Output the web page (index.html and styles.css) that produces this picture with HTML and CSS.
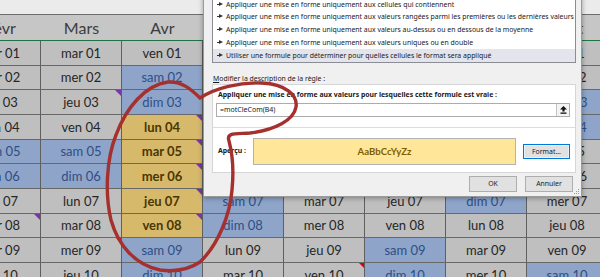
FILE: index.html
```html
<!DOCTYPE html>
<html lang="fr">
<head>
  <meta charset="UTF-8">
  <title>Mise en forme conditionnelle</title>
  <link rel="stylesheet" href="styles.css">
</head>
<body>
  <div class="topbar"></div>
  <div class="grid">
    <div class="head">Févr</div><div class="head">Mars</div><div class="head">Avr</div><div class="head">Mai</div><div class="head">Juin</div><div class="head">Juil</div><div class="head">Août</div><div class="head">Sept</div>

    <!-- Mai..Août rows 01-06 sit under the dialog -->
    <div class="c">mar 01</div><div class="c">mar 01</div><div class="c">ven 01</div><div class="c we"></div><div class="c"></div><div class="c"></div><div class="c"></div><div class="c">jeu 01</div>
    <div class="c">mer 02</div><div class="c">mer 02</div><div class="c we">sam 02</div><div class="c"></div><div class="c"></div><div class="c we"></div><div class="c"></div><div class="c">ven 02</div>
    <div class="c">jeu 03</div><div class="c n">jeu 03</div><div class="c we">dim 03</div><div class="c"></div><div class="c"></div><div class="c we"></div><div class="c"></div><div class="c we">sam 03</div>
    <div class="c">ven 04</div><div class="c">ven 04</div><div class="c hl n">lun 04</div><div class="c"></div><div class="c we"></div><div class="c"></div><div class="c"></div><div class="c we">dim 04</div>
    <div class="c we">sam 05</div><div class="c we">sam 05</div><div class="c hl n">mar 05</div><div class="c"></div><div class="c we"></div><div class="c"></div><div class="c"></div><div class="c">lun 05</div>
    <div class="c we">dim 06</div><div class="c we">dim 06</div><div class="c hl n">mer 06</div><div class="c"></div><div class="c"></div><div class="c"></div><div class="c we"></div><div class="c">mar 06</div>
    <div class="c">lun 07</div><div class="c">lun 07</div><div class="c hl n">jeu 07</div><div class="c we">sam 07</div><div class="c">mar 07</div><div class="c">jeu 07</div><div class="c we">dim 07</div><div class="c">mer 07</div>
    <div class="c n">mar 08</div><div class="c">mar 08</div><div class="c hl n">ven 08</div><div class="c we">dim 08</div><div class="c">mer 08</div><div class="c">ven 08</div><div class="c">lun 08</div><div class="c">jeu 08</div>
    <div class="c">mer 09</div><div class="c r">mer 09</div><div class="c we">sam 09</div><div class="c">lun 09</div><div class="c">jeu 09</div><div class="c we">sam 09</div><div class="c">mar 09</div><div class="c">ven 09</div>
    <div class="c">jeu 10</div><div class="c">jeu 10</div><div class="c we">dim 10</div><div class="c">mar 10</div><div class="c r">ven 10</div><div class="c we">dim 10</div><div class="c">mer 10</div><div class="c we">sam 10</div>
  </div>

  <div class="dialog">
    <div class="rules">
      <div class="rule"><span class="arrow"></span>Mettre en forme toutes les cellules d'après leur valeur</div>
      <div class="rule"><span class="arrow"></span>Appliquer une mise en forme uniquement aux cellules qui contiennent</div>
      <div class="rule"><span class="arrow"></span>Appliquer une mise en forme uniquement aux valeurs rangées parmi les premières ou les dernières valeurs</div>
      <div class="rule"><span class="arrow"></span>Appliquer une mise en forme uniquement aux valeurs au-dessus ou en dessous de la moyenne</div>
      <div class="rule"><span class="arrow"></span>Appliquer une mise en forme uniquement aux valeurs uniques ou en double</div>
      <div class="rule selected"><span class="arrow"></span>Utiliser une formule pour déterminer pour quelles cellules le format sera appliqué</div>
    </div>

    <div class="desc-label"><u>M</u>odifier la description de la règle :</div>

    <div class="group">
      <div class="formula-part">
        <div class="bold-label">Appliquer une mise en forme aux valeurs pour lesquelles cette formule est vraie :</div>
        <div class="formula">
          <span class="formula-text">=motCleCom(B4)</span>
          <span class="ref-btn">
            <svg width="7" height="8" viewBox="0 0 7 8"><path d="M3.5 0 L7 3.5 L4.6 3.5 L4.6 5.5 L2.4 5.5 L2.4 3.5 L0 3.5 Z" fill="#111"/><rect x="0.5" y="6.5" width="6" height="1.3" fill="#111"/></svg>
          </span>
        </div>
      </div>
      <div class="preview-part">
        <div class="bold-label preview-label">Aperçu :</div>
        <div class="preview">AaBbCcYyZz</div>
        <div class="btn focus">Format...</div>
      </div>
    </div>

    <div class="actions">
      <div class="btn">OK</div>
      <div class="btn">Annuler</div>
    </div>

    <svg class="grip" width="8" height="8" viewBox="0 0 8 8">
      <rect x="6" y="2" width="1" height="1" fill="#999"/>
      <rect x="4" y="4" width="1" height="1" fill="#999"/>
      <rect x="6" y="4" width="1" height="1" fill="#999"/>
      <rect x="2" y="6" width="1" height="1" fill="#999"/>
      <rect x="4" y="6" width="1" height="1" fill="#999"/>
      <rect x="6" y="6" width="1" height="1" fill="#999"/>
    </svg>
  </div>

  <svg class="annot" width="600" height="277" viewBox="0 0 600 277">
    <path d="M200 98 C215 88, 240 82, 262 83 C285 84, 298 95, 296 107 C294 120, 275 130, 250 133 C236 134, 226 132, 229 141 C233 156, 234 170, 232 190 C230 215, 218 245, 200 262 C188 270, 175 272, 160 270 C135 265, 118 245, 111 220 C105 195, 106 160, 116 135 C126 108, 145 85, 168 82 C182 81, 192 90, 200 98" fill="none" stroke="#a5302d" stroke-width="3.4" stroke-linecap="round" stroke-linejoin="round"/>
  </svg>
</body>
</html>
```

FILE: styles.css
```css
body {
  margin: 0;
  width: 600px;
  height: 277px;
  overflow: hidden;
  position: relative;
  background: #c0c0c0;
  font-family: Lato, "Noto Sans", sans-serif;
}

.topbar {
  height: 14px;
  background: #ebebeb;
  border-bottom: 1px solid #6d6d6d;
}

.grid {
  display: grid;
  grid-template-columns: repeat(8, 81px);
  grid-template-rows: 26px;
  grid-auto-rows: 24.67px;
  margin-left: -40px;
}

.head {
  box-sizing: border-box;
  display: flex;
  align-items: center;
  justify-content: center;
  background: #c6c6c6;
  border-bottom: 1px solid #217346;
  font-size: 16px;
  color: #3c3c3c;
}

.c {
  box-sizing: border-box;
  position: relative;
  display: flex;
  align-items: center;
  justify-content: center;
  background: #bfbfbf;
  border-right: 1px solid #5f5f5f;
  border-bottom: 1px solid #686868;
  font-size: 13px;
  color: #262626;
}

.c.we {
  background: #8ea4c8;
  color: #2f4f86;
}

.c.hl {
  background: #d7b96c;
  color: #4a3700;
  font-weight: 700;
}

.c.n::after,
.c.r::after {
  content: "";
  position: absolute;
  top: 0;
  right: 0;
  border-top: 6px solid #7a35a8;
  border-left: 6px solid transparent;
}

.c.r::after {
  border-top: 5px solid #e00000;
  border-left: 5px solid transparent;
}

/* dialog */
.dialog {
  position: absolute;
  left: 203px;
  top: -20px;
  width: 379px;
  height: 217px;
  box-sizing: border-box;
  padding: 0 5px 0 8px;
  background: #f0f0f0;
  border-left: 1px solid #9a9a9a;
  border-right: 1px solid #9a9a9a;
  border-bottom: 1px solid #9a9a9a;
  box-shadow: 0 1px 5px rgba(0, 0, 0, 0.35);
  font-family: "Noto Sans", "Liberation Sans", sans-serif;
  font-size: 6.9px;
  color: #1a1a1a;
}

.rules {
  margin-top: 1px;
  padding-top: 3px;
  background: #fff;
  border: 1px solid #8a8d93;
}

.rule {
  height: 12.75px;
  display: flex;
  align-items: center;
  gap: 3px;
  padding-left: 4px;
  white-space: nowrap;
  overflow: hidden;
}

.rule.selected {
  background: #e4e4ec;
}

.arrow {
  width: 6px;
  height: 5px;
  flex: none;
  background:
    linear-gradient(#333, #333) 0 2px / 2px 1px no-repeat;
  position: relative;
}

.arrow::after {
  content: "";
  position: absolute;
  right: 0;
  top: 0;
  border-left: 4px solid #333;
  border-top: 2.5px solid transparent;
  border-bottom: 2.5px solid transparent;
}

.desc-label {
  margin-top: 11px;
  height: 10px;
  line-height: 10px;
  padding-left: 1px;
}

.group {
  background: #fff;
  border: 1px solid #d6d6d6;
}

.formula-part {
  padding: 5px 5px 10px 3px;
  border-bottom: 1px solid #dcdcdc;
}

.bold-label {
  font-weight: 700;
  line-height: 10px;
  height: 10px;
  padding-left: 2px;
}

.formula {
  margin-top: 3px;
  height: 14px;
  box-sizing: border-box;
  display: flex;
  align-items: center;
  justify-content: space-between;
  border: 1px solid #acacac;
  padding-left: 3px;
  padding-right: 0;
}

.formula-text {
  font-size: 7px;
}

.ref-btn {
  width: 13px;
  height: 12px;
  box-sizing: border-box;
  display: flex;
  align-items: center;
  justify-content: center;
  border-left: 1px solid #c4c4c4;
  background: #f4f4f4;
}

.preview-part {
  display: flex;
  align-items: center;
  height: 44px;
  padding-left: 3px;
  padding-top: 3px;
  box-sizing: border-box;
}

.preview-label {
  width: 35px;
  flex: none;
  padding-left: 2px;
  white-space: nowrap;
}

.preview {
  width: 263px;
  height: 27px;
  box-sizing: border-box;
  display: flex;
  align-items: center;
  justify-content: center;
  background: #ffe699;
  border: 1px solid #b3b3b3;
  font-family: Lato, sans-serif;
  font-weight: 700;
  font-size: 9.6px;
  color: #7f6000;
}

.btn {
  width: 48px;
  height: 16px;
  box-sizing: border-box;
  display: flex;
  align-items: center;
  justify-content: center;
  background: #e1e1e1;
  border: 1px solid #adadad;
  font-size: 6.9px;
}

.btn.focus {
  margin-left: 7px;
  width: 47px;
  height: 15px;
  border: 1px solid #0078d7;
  box-shadow: inset 0 0 0 1px #e8f0f8;
}

.actions {
  display: flex;
  justify-content: flex-end;
  gap: 8px;
  margin-top: 3px;
  padding-right: 3px;
}

.grip {
  position: absolute;
  right: 1px;
  bottom: 1px;
}

.annot {
  position: absolute;
  left: 0;
  top: 0;
  pointer-events: none;
}
```
